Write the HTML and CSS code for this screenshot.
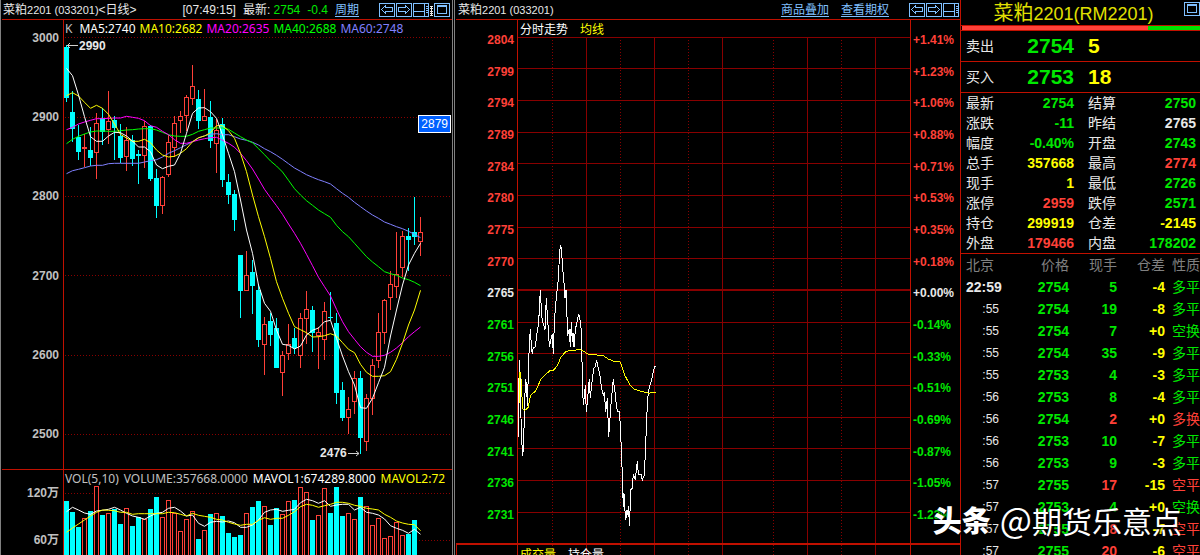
FILE: index.html
```html
<!DOCTYPE html>
<html lang="zh-CN">
<head>
<meta charset="utf-8">
<title>菜粕2201 行情</title>
<link rel="stylesheet" href="styles.css">
</head>
<body>
<svg class="defs" aria-hidden="true">
  <symbol id="i-prev" viewBox="0 0 16 14"><path d="M.5.5h15v13h-15zM2.5 6.5l4-4v2h7v4h-7v2z"/></symbol>
  <symbol id="i-next" viewBox="0 0 16 14"><path d="M.5.5h15v13h-15zM13.500 6.500l-4-4v2h-7v4h7v2z"/></symbol>
  <symbol id="i-split" viewBox="0 0 16 14"><path d="M.5.5h15v13h-15zM11.500.5v13M.5 8.500h11M13 3.500h1.500M13 5.500h1.500M13 7.500h1.500M13 9.500h1.500"/></symbol>
  <symbol id="i-max" viewBox="0 0 16 14"><path d="M.5.5h15v13h-15zM3.500 3.500h9v7h-9zM3 2.500h10"/></symbol>
</svg>
<main class="terminal">
  <section class="panel daily">
    <header class="bar">
      <h2 class="name">菜粕<span class="latin">2201 (033201)</span>&lt;日线&gt;</h2>
      <div class="info">
        <span>[07:49:15]</span>
        <span>最新: <b class="down">2754</b></span>
        <span class="down">-0.4</span>
        <a href="#">周期</a>
      </div>
      <div class="tools">
        <button aria-label="上一个"><svg><use href="#i-prev"/></svg></button>
        <button aria-label="下一个"><svg><use href="#i-next"/></svg></button>
        <button aria-label="分屏"><svg><use href="#i-split"/></svg></button>
        <svg class="sliver" viewBox="0 0 3 14" aria-hidden="true"><path d="M0 3.500h3M0 5.500h3M0 8.500h3M0 10.500h3M0 12.500h3M1.500 3v10"/></svg>
        <button aria-label="最大化"><svg><use href="#i-max"/></svg></button>
      </div>
    </header>
    <div class="axis price-axis"><span>3000</span><span>2900</span><span>2800</span><span>2700</span><span>2600</span><span>2500</span></div>
    <div class="plot">
      <div class="legend"><span class="grey k">K</span><span>MA5:2740</span><span class="yellow">MA10:2682</span><span class="magenta">MA20:2635</span><span class="green">MA40:2688</span><span class="blue">MA60:2748</span></div>
      <div class="stage">
        <svg id="candles" viewBox="64 37 388 432" preserveAspectRatio="none"></svg>
        <span class="mark high">2990</span>
        <span class="mark low">2476</span>
        <span class="tag">2879</span>
      </div>
    </div>
    <div class="axis vol-axis"><span>120万</span><span>60万</span></div>
    <div class="plot vol">
      <div class="legend"><span class="grey">VOL(5,10)</span><span class="grey">VOLUME:357668.0000</span><span>MAVOL1:674289.8000</span><span class="yellow">MAVOL2:72</span></div>
      <div class="stage"><svg id="volume" viewBox="64 485 388 70" preserveAspectRatio="none"></svg></div>
    </div>
  </section>

  <section class="panel intraday">
    <header class="bar">
      <h2 class="name">菜粕<span class="latin">2201 (033201)</span></h2>
      <div class="info links"><a href="#">商品叠加</a><a href="#">查看期权</a></div>
      <div class="tools">
        <button aria-label="上一个"><svg><use href="#i-prev"/></svg></button>
        <button aria-label="下一个"><svg><use href="#i-next"/></svg></button>
        <button aria-label="分屏"><svg><use href="#i-split"/></svg></button>
      </div>
    </header>
    <div class="axis level red"><span>2804</span><span>2799</span><span>2794</span><span>2789</span><span>2784</span><span>2780</span><span>2775</span><span>2770</span><span class="white">2765</span><span class="down">2761</span><span class="down">2756</span><span class="down">2751</span><span class="down">2746</span><span class="down">2741</span><span class="down">2736</span><span class="down">2731</span></div>
    <div class="plot">
      <div class="legend cn"><span>分时走势</span><span class="yellow">均线</span></div>
      <div class="stage"><svg id="minute" viewBox="518 37 392 506" preserveAspectRatio="none"></svg></div>
    </div>
    <div class="axis level pct red"><span>+1.41%</span><span>+1.23%</span><span>+1.06%</span><span>+0.88%</span><span>+0.71%</span><span>+0.53%</span><span>+0.35%</span><span>+0.18%</span><span class="white">+0.00%</span><span class="down">-0.14%</span><span class="down">-0.33%</span><span class="down">-0.51%</span><span class="down">-0.69%</span><span class="down">-0.87%</span><span class="down">-1.05%</span><span class="down">-1.23%</span></div>
    <div class="foot foot-left"></div>
    <div class="foot foot-mid">
      <svg id="minuteVol" viewBox="518 545 392 10" preserveAspectRatio="none"></svg>
      <div class="legend cn"><span class="yellow">成交量</span><span>持仓量</span></div>
    </div>
    <div class="foot"></div>
  </section>

  <aside class="quote">
    <header class="title">
      <h1>菜粕<span>2201(RM2201)</span></h1>
      <button aria-label="最大化"><svg><use href="#i-max"/></svg></button>
    </header>
    <div class="ratio"><i class="buy"></i><i class="sell"></i></div>
    <div class="deal"><span>卖出</span><b class="down">2754</b><b class="yellow">5</b></div>
    <div class="deal"><span>买入</span><b class="down">2753</b><b class="yellow">18</b></div>
    <table class="stats">
      <tr><th>最新</th><td class="down">2754</td><th>结算</th><td class="down">2750</td></tr>
      <tr><th>涨跌</th><td class="down">-11</td><th>昨结</th><td>2765</td></tr>
      <tr><th>幅度</th><td class="down">-0.40%</td><th>开盘</th><td class="down">2743</td></tr>
      <tr><th>总手</th><td class="yellow">357668</td><th>最高</th><td class="red">2774</td></tr>
      <tr><th>现手</th><td class="yellow">1</td><th>最低</th><td class="down">2726</td></tr>
      <tr><th>涨停</th><td class="red">2959</td><th>跌停</th><td class="down">2571</td></tr>
      <tr><th>持仓</th><td class="yellow">299919</td><th>仓差</th><td class="yellow">-2145</td></tr>
      <tr><th>外盘</th><td class="red">179466</td><th>内盘</th><td class="down">178202</td></tr>
    </table>
    <table class="ticks">
      <thead><tr><th>北京</th><th>价格</th><th>现手</th><th>仓差</th><th>性质</th></tr></thead>
      <tbody>
        <tr><td class="full">22:59</td><td>2754</td><td>5</td><td>-4</td><td>多平</td></tr>
        <tr><td>:55</td><td>2754</td><td>19</td><td>-8</td><td>多平</td></tr>
        <tr><td>:55</td><td>2754</td><td>7</td><td>+0</td><td>空换</td></tr>
        <tr><td>:55</td><td>2754</td><td>35</td><td>-9</td><td>多平</td></tr>
        <tr><td>:55</td><td>2753</td><td>4</td><td>-3</td><td>多平</td></tr>
        <tr><td>:56</td><td>2753</td><td>8</td><td>-4</td><td>多平</td></tr>
        <tr class="up"><td>:56</td><td>2754</td><td>2</td><td>+0</td><td>多换</td></tr>
        <tr><td>:56</td><td>2753</td><td>10</td><td>-7</td><td>多平</td></tr>
        <tr><td>:56</td><td>2753</td><td>9</td><td>-3</td><td>多平</td></tr>
        <tr class="up"><td>:57</td><td>2755</td><td>17</td><td>-15</td><td>空平</td></tr>
        <tr><td>:57</td><td>2753</td><td>4</td><td>+0</td><td>空换</td></tr>
        <tr class="up"><td>:57</td><td>2755</td><td>8</td><td>-7</td><td>空平</td></tr>
        <tr class="up"><td>:57</td><td>2755</td><td>20</td><td>-6</td><td>空平</td></tr>
      </tbody>
    </table>
  </aside>
  <div class="credit"><b>头条</b><span><span class="at">@</span>期货乐意点</span></div>
</main>
<script src="chart.js"></script>
</body>
</html>
```
FILE: styles.css
```css
* { box-sizing: border-box; }
body {
  margin: 0;
  background: #000;
  color: #e8e8e8;
  font: 12px/14px "Liberation Sans", "Noto Sans CJK SC", sans-serif;
}
h1, h2 { margin: 0; font-weight: 400; }
a { color: #80c0ff; text-underline-offset: 2px; }
button { padding: 0; border: 0; background: #000; width: 16px; height: 14px; display: block; }
button svg { display: block; width: 16px; height: 14px; fill: none; stroke: #80c0ff; shape-rendering: crispEdges; }
.defs { display: none; }

.red { color: #ff4038; }
.down { color: #00e800; }
.white { color: #e8e8e8; }
.yellow { color: #ff0; }
.magenta { color: #f0f; }
.green { color: #0f0; }
.blue { color: #8080ff; }
.grey { color: #c0c0c0; }

.terminal {
  position: relative;
  display: grid;
  grid-template-columns: minmax(0, 454fr) minmax(0, 506fr) minmax(0, 240fr);
  height: 100vh;
  overflow: hidden;
}
.panel { display: grid; min-height: 0; overflow: hidden; }
.daily {
  grid-template-columns: 61px minmax(0, 1fr);
  grid-template-rows: 20px minmax(0, 1fr) 85px;
  margin-right: 1px;
  padding-left: 1px;
  border-left: 1px solid #808080;
  border-right: 1px solid #808080;
}
.intraday {
  grid-template-columns: 61px minmax(0, 1fr) 50px;
  grid-template-rows: 20px minmax(0, 1fr) 12px;
  border-left: 1px solid #808080;
  padding-left: 1px;
}

.bar {
  grid-column: 1 / -1;
  display: flex;
  align-items: center;
  padding: 0 2px 0 1px;
  border-bottom: 1px solid #c01000;
  white-space: nowrap;
}
.name { font-size: 12px; }
.latin { font-size: 11px; }
.info { display: flex; gap: 7px; margin-left: auto; margin-right: 20px; }
.info b { font-weight: 400; }
.links { gap: 12px; }
.tools { display: flex; gap: 1px; }
.sliver { width: 3px; height: 14px; stroke: #e8e8e8; shape-rendering: crispEdges; }
.intraday .bar { padding: 0 1px 0 2px; }

.axis {
  display: flex;
  flex-direction: column;
  justify-content: space-between;
  text-align: right;
  font-weight: 700;
}
.price-axis { padding: 11px 4px 28px 0; color: #c0c0c0; border-bottom: 1px solid #c01000; }
.vol-axis { padding: 16px 4px 8px 0; color: #c0c0c0; }
.level { padding: 13px 3px 21px 0; }
.pct { padding-left: 2px; text-align: left; border-left: 1px solid #c01000; }

.plot { display: flex; flex-direction: column; min-height: 0; border-left: 1px solid #c01000; }
.daily .plot { border-bottom: 1px solid #c01000; }
.daily .vol { border-bottom: 0; }
.legend {
  flex: none;
  display: flex;
  gap: 4px;
  height: 17px;
  padding: 1px 0 0 1px;
  font-family: "Noto Sans", sans-serif;
  font-size: 12px;
  line-height: 16px;
  color: #fff;
  white-space: nowrap;
}
.legend .k { margin-right: 3px; }
.vol .legend { height: 15px; gap: 5px; }
.legend.cn { gap: 12px; padding-left: 2px; font-family: "Noto Sans CJK SC", sans-serif; }
.stage { position: relative; flex: 1; min-height: 0; }
.stage svg { display: block; width: 100%; height: 100%; }
.mark, .tag { position: absolute; }
.mark { font-weight: 700; }
.high { left: 15px; top: 2px; }
.low { left: 66%; bottom: 9px; }
.tag {
  right: 1px;
  top: 78px;
  padding: 0 2px;
  border: 1px solid #fff;
  background: #0060ff;
  color: #fff;
  font-size: 12px;
  line-height: 16px;
}

.foot { border-top: 2px solid #c01000; }
.foot-left { border-left: 1px solid #c01000; }
.foot-mid { display: grid; overflow: hidden; border-left: 1px solid #c01000; border-right: 1px solid #c01000; margin-right: -1px; }
.foot-mid > * { grid-area: 1 / 1; width: 100%; }
.foot-mid svg { height: 10px; }

/* chart strokes */
svg .ln { fill: none; vector-effect: non-scaling-stroke; }
svg .crisp { shape-rendering: crispEdges; }
svg .grid { stroke: #880000; }
svg .dots { stroke: #880000; stroke-dasharray: 1 2; }
svg .thick { stroke-width: 2; }
svg .upc { stroke: #ff4038; }
svg .dnc { stroke: #00ffff; }
svg .dnf { fill: #00ffff; }
svg .hollow { stroke: #ff4038; fill: #000; vector-effect: non-scaling-stroke; }

.quote { display: flex; flex-direction: column; min-width: 0; overflow: hidden; border-left: 1px solid #c01000; }
.quote > * { flex: none; }
.title { display: flex; align-items: flex-start; height: 25px; padding-top: 2px; }
.title h1 { flex: 1; padding-left: 2px; text-align: center; color: #e0e000; font-size: 20px; line-height: 23px; white-space: nowrap; }
.title span { font-size: 18px; }
.ratio { display: flex; height: 6px; padding-left: 1px; border: solid #c01000; border-width: 1px 0; }
.buy { flex: 186; background: #ff4038; }
.sell { flex: 52; background: #00e000; }
.deal {
  display: grid;
  grid-template-columns: 28px 80px 1fr;
  align-items: center;
  height: 31px;
  padding-left: 5px;
  border-bottom: 1px solid #c01000;
  font-size: 14px;
}
.deal b { font-size: 21px; line-height: 24px; }
.deal b:nth-child(2) { text-align: right; }
.deal b:last-child { padding-left: 14px; }

table { table-layout: fixed; border-collapse: collapse; font-size: 14px; white-space: nowrap; }
th { padding: 0; font-weight: 400; text-align: left; }
td { padding: 0; font-weight: 700; text-align: right; }
.stats { width: calc(100% - 9px); margin-left: 5px; }
.stats tr { height: 20px; }
.stats th { width: 28px; }
.stats th:nth-child(3) { width: 42px; padding-left: 14px; }
.stats td:nth-child(2) { width: 80px; }
.quote .ticks { border-top: 1px solid #c01000; width: 100%; padding-left: 5px; border-collapse: separate; border-spacing: 0; }
.ticks tr { height: 22px; color: #00e800; }
.ticks th { width: 48px; color: #808080; text-align: right; }
.ticks th:first-child { width: 40px; text-align: left; }
.ticks th:nth-child(2) { width: 63px; }
.ticks .up td:nth-child(3), .ticks .up td:nth-child(5) { color: #ff4038; }
.ticks th:last-child, .ticks td:last-child { width: auto; padding-left: 7px; text-align: left; font-weight: 400; }
.ticks td:first-child { padding-right: 7px; color: #e8e8e8; font-size: 12px; font-weight: 400; }
.ticks td.full { padding: 0; font-size: 14px; font-weight: 700; text-align: left; }
.ticks td:nth-child(4) { color: #ff0; }

.credit {
  position: absolute;
  right: 18px;
  bottom: 20px;
  display: flex;
  gap: 9px;
  color: #fff;
  font: 30px/30px "Noto Sans CJK SC", sans-serif;
  text-shadow: 1px 1px 2px #000;
  white-space: nowrap;
}
.credit b { font-size: 29px; font-weight: 900; }
.at { font-size: 34px; }
```
FILE: chart.js
```js
const el = id => document.getElementById(id);
const path = (cls, d, extra = '') => `<path class="ln ${cls}" d="${d}" ${extra}/>`;
const STEP = 6, FIRST = 66;

// Candles: [rising, high, body top, body bottom, low]
const candles = [
  [0,45,47,98,102],[0,91,112,129,142],[0,125,137,152,160],[1,134,147,149,167],[0,127,150,158,166],
  [1,113,123,153,179],[0,108,118,132,145],[1,91,121,130,144],[0,116,120,128,160],[0,124,136,158,163],
  [1,127,140,157,171],[0,135,140,159,166],[0,150,154,156,184],[1,121,126,156,168],[0,125,126,179,181],
  [0,169,178,206,218],[1,176,177,206,214],[1,135,142,175,177],[1,116,123,148,157],[1,111,116,121,133],
  [1,95,97,116,131],[1,65,86,99,105],[0,90,99,121,129],[1,89,116,121,121],[0,101,117,141,148],
  [1,119,130,144,173],[0,118,124,180,187],[0,174,182,195,204],[0,190,194,220,231],[0,255,255,291,318],
  [1,251,275,291,291],[0,260,272,286,314],[0,284,290,340,347],[1,317,324,345,375],[0,313,321,335,346],
  [0,318,328,368,368],[1,351,355,373,396],[1,324,344,354,360],[0,328,338,348,354],[1,313,318,356,368],
  [1,291,309,319,344],[0,306,310,333,352],[1,327,332,336,369],[1,302,311,340,360],[0,292,317,318,320],
  [0,313,323,393,404],[0,382,390,418,421],[1,397,409,418,434],[1,371,378,402,414],[0,371,378,438,454],
  [1,394,398,442,451],[1,359,365,399,415],[1,313,332,361,368],[1,299,300,333,344],[1,271,284,298,310],
  [1,232,274,287,298],[1,231,236,268,277],[0,228,236,240,271],[0,197,232,237,245],[1,217,232,242,256]
];
const line = ys => ys.map((y, i) => `${i ? 'L' : 'M'}${FIRST + .5 + i * STEP} ${y}`).join('');
// Values recorded on a grid three times finer than the plot
const scale = (ys, off) => ys.map(y => Math.round((y / 3 + off) * 10) / 10);

const ma = {
  '#8080ff': scale([521,512,508,503,498,496,496,491,490,490,490,490,490,486,482,479,471,460,452,443,434,425,414,407,403,401,404,404,410,417,421,427,435,446,455,466,478,491,504,514,524,532,539,545,552,566,580,592,607,620,633,645,655,666,673,680,686,694,703,713], 0),
  '#00ff00': [...scale([431,418,409,402,396,393,393,394,394,392,390,389,387,386,386,390,397,404,408,409,409,403,394,389,384,384,384,388,399,410,420,428,446,464,483,498,516,541,566,585,602,616,630,641,652,676,695,710], 0), ...scale([40,60,80,96,110,125,131,136,144,149,157,167], 230)],
  '#ff00ff': [...scale([389,382,372,366,361,356,356,355,354,354,349,352,355,362,377,382,394,404,419,430,430,425,420,416,413,412,421,430,442,460,482,507,537,568,593,617,643,672], 0), ...scale([10,40,73,107,142,170,198,238,275,305,328,350,367,379,379,376,367,354,338,320,305,291], 230)],
  '#ffff00': [...scale([287,278,288,307,325,316,325,343,372,403,414,424,424,418,428,450,465,471,469,460,446,425,413,408,398,377,377,392,415,460,515,585,650], 0), ...scale([20,85,155,205,250,290,299,308,321,320,317,311,318,338,358,368,403,427,439,439,437,425,388,340,285,240,181], 230)],
  '#ffffff': [...scale([205,227,285,350,410,424,424,408,397,398,408,423,441,441,455,495,506,499,495,460,400,340,324,323,335,355,405,460,515,600], 0), ...scale([0,70,165,220,244,300,343,346,357,348,315,301,294,275,271,325,378,425,465,533,535,505,458,412,318,240,165,105,70,40], 230)]
};

let out = '';
for (const y of [37, 117, 196, 275, 355, 434]) out += path('dots crisp', `M65 ${y + .5}H452`);
candles.forEach(([up, hi, top, bot, lo], i) => {
  const x = FIRST + i * STEP;
  if (up) {
    out += path('upc crisp', `M${x + .5} ${hi}V${lo}`);
    out += `<rect class="hollow crisp" x="${x - 1.5}" y="${top + .5}" width="4" height="${Math.max(bot - top - 1, 1)}"/>`;
  } else {
    out += path('dnc crisp', `M${x + .5} ${hi}V${lo}`);
    out += `<rect class="dnf crisp" x="${x - 2}" y="${top}" width="5" height="${bot - top}"/>`;
  }
});
for (const c in ma) out += path('', line(ma[c]), `stroke="${c}"`);
out += path('', 'M67 45.500H78M70 43L67.500 45.500L70 48M348 453.500H359M356 451L359 453.500L356 456', 'stroke="#d0d0d0"');
el('candles').innerHTML = out;

const vol = [123,156,201,175,153,79,165,160,147,192,145,198,171,178,147,111,172,121,160,214,178,154,237,211,162,160,168,219,231,225,160,141,123,139,195,144,163,124,120,82,97,180,166,85,159,81,168,160,178,111,139,196,175,235,229,187,226,222,180];
// Days whose volume bar is drawn hollow
const hollow = new Set([3,5,7,10,13,16,17,18,19,20,21,23,25,30,33,36,37,39,40,42,43,47,48,50,51,52,53,54,55,56]);
out = '';
for (const y of [493, 540]) out += path('dots crisp', `M65 ${y + .5}H452`);
vol.forEach((v, i) => {
  const x = FIRST + i * STEP, y = Math.round(v / 3 + 460);
  out += hollow.has(i)
    ? `<rect class="hollow crisp" x="${x - 1.5}" y="${y + .5}" width="4" height="90"/>`
    : `<rect class="dnf crisp" x="${x - 2}" y="${y}" width="5" height="90"/>`;
});
out += path('', line(scale([155,142,150,159,163,153,151,148,142,150,160,168,172,178,168,160,157,145,142,153,168,165,190,199,187,184,186,183,188,202,202,195,180,157,150,148,154,151,148,128,118,122,130,122,139,135,133,133,150,142,157,160,165,177,197,205,211,220,208,223], 460)), 'stroke="#fff"');
out += path('', line(scale([217,204,192,180,168,157,150,151,152,157,157,163,161,161,161,161,161,157,158,163,168,160,166,169,172,178,180,187,192,196,193,193,181,173,178,175,175,166,155,140,133,136,142,137,133,127,127,130,136,139,145,147,150,163,172,183,189,193,194,212], 460)), 'stroke="#ff0"');
el('volume').innerHTML = out;

const solid = [586, 654, 722, 807, 875], dotted = [552, 620, 688, 773, 841];
const columns = (a, b) =>
  solid.map(x => path('grid crisp', `M${x + .5} ${a}V${b}`)).join('') +
  dotted.map(x => path('dots crisp', `M${x + .5} ${a}V${b}`)).join('');
out = columns(37, 543);
for (const y of [37,68,100,132,163,195,227,258,322,353,385,417,448,480,512]) out += path('grid crisp', `M518 ${y + .5}H910`);
out += path('grid thick crisp', 'M518 290H910');

const poly = s => s.split(' ').map((p, i) => {
  const [x, y] = p.split(',').map(Number);
  return `${i ? 'L' : 'M'}${(x / 3 + 450).toFixed(1)} ${(y / 3 + 275).toFixed(1)}`;
}).join('');
const avg = '208,385 210,290 213,310 215,350 218,400 222,406 228,404 234,398 240,370 244,358 255,350 262,338 272,313 285,300 300,287 310,286 322,272 332,248 345,232 358,226 375,226 388,223 396,226 415,238 440,240 460,242 475,252 490,258 510,261 516,275 525,302 540,330 552,342 570,348 598,355 608,352 618,352';
const last = '205,485 206,370 208,255 211,310 213,430 216,510 218,542 220,520 222,460 224,375 227,312 230,340 232,392 235,300 238,210 241,162 245,225 247,236 250,218 256,216 260,180 265,150 268,110 271,45 274,100 277,140 281,150 285,165 289,70 292,120 296,180 298,216 301,205 304,185 307,180 310,236 313,150 316,100 320,55 325,15 327,-30 328,-65 332,-90 335,-75 337,-30 341,10 345,70 348,45 352,150 353,182 358,163 361,216 364,142 367,200 369,174 372,216 376,165 380,145 386,117 390,135 394,165 396,260 398,345 400,390 404,355 406,330 409,410 412,380 418,312 421,370 426,320 431,280 436,275 440,255 444,275 449,295 454,335 460,360 463,352 467,410 472,370 476,485 480,430 484,375 490,313 495,350 500,400 504,410 508,410 511,450 514,520 517,600 520,695 522,655 524,695 527,735 531,705 534,720 536,693 538,752 541,690 542,645 547,640 550,598 556,615 562,558 565,598 573,598 577,615 583,600 587,510 590,430 593,370 598,335 605,315 610,290 614,274 618,274';
out += path('crisp', poly(last), 'stroke="#fff"') + path('crisp', poly(avg), 'stroke="#ff0"');
el('minute').innerHTML = out;
el('minuteVol').innerHTML = columns(545, 555);
```
